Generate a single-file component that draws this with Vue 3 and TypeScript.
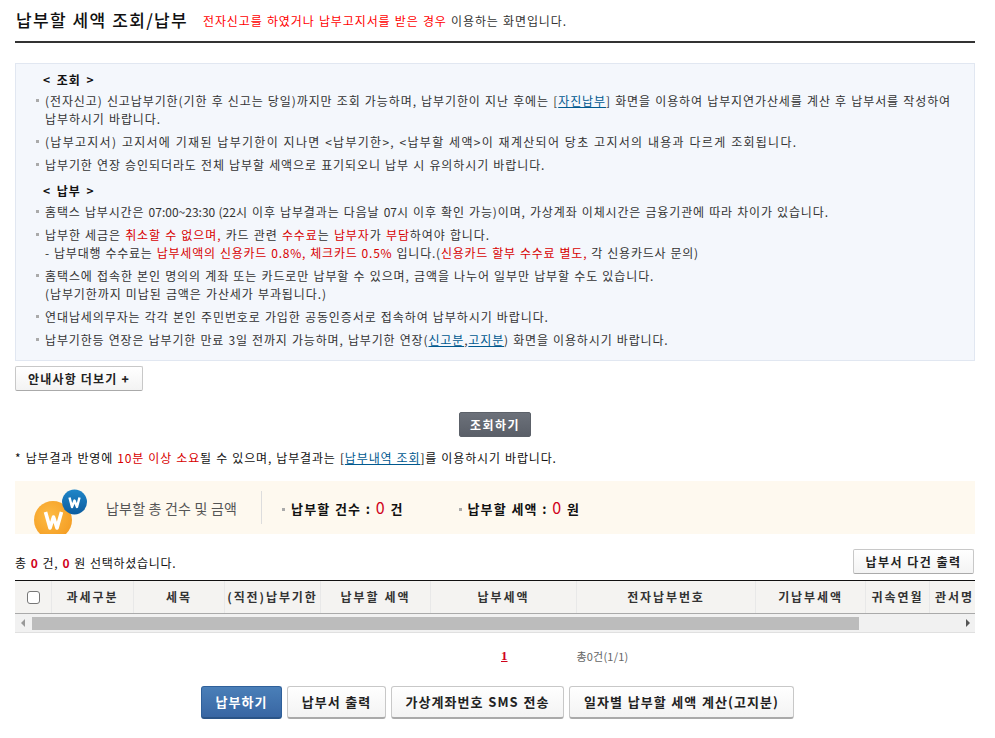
<script setup lang="ts">
const columns: { label: string; width: number }[] = [
  { label: '', width: 37 },
  { label: '과세구분', width: 82 },
  { label: '세목', width: 91 },
  { label: '(직전)납부기한', width: 96 },
  { label: '납부할 세액', width: 110 },
  { label: '납부세액', width: 146 },
  { label: '전자납부번호', width: 179 },
  { label: '기납부세액', width: 110 },
  { label: '귀속연월', width: 64 },
  { label: '관서명', width: 64 }
]
</script>

<template>
  <div class="page">
    <header class="title-row">
      <h1>납부할 세액 조회/납부</h1>
      <p><span class="bright">전자신고를 하였거나 납부고지서를 받은 경우</span> 이용하는 화면입니다.</p>
    </header>

    <section class="info">
      <h2>&lt; 조회 &gt;</h2>
      <ul>
        <li>(전자신고) 신고납부기한(기한 후 신고는 당일)까지만 조회 가능하며, 납부기한이 지난 후에는 [<a>자진납부</a>] 화면을 이용하여 납부지연가산세를 계산 후 납부서를 작성하여 납부하시기 바랍니다.</li>
        <li class="loose">(납부고지서) 고지서에 기재된 납부기한이 지나면 &lt;납부기한&gt;, &lt;납부할 세액&gt;이 재계산되어 당초 고지서의 내용과 다르게 조회됩니다.</li>
        <li>납부기한 연장 승인되더라도 전체 납부할 세액으로 표기되오니 납부 시 유의하시기 바랍니다.</li>
      </ul>
      <h2 class="second">&lt; 납부 &gt;</h2>
      <ul>
        <li class="snug">홈택스 납부시간은 <span class="digits">07:00~23:30 (22</span>시 이후 납부결과는 다음날 <span class="digits">07</span>시 이후 확인 가능)이며, 가상계좌 이체시간은 금융기관에 따라 차이가 있습니다.</li>
        <li>납부한 세금은 <span class="red">취소할 수 없으며,</span> 카드 관련 <span class="red">수수료</span>는 <span class="red">납부자</span>가 <span class="red">부담</span>하여야 합니다.<br /><span class="tight">- 납부대행 수수료는 <span class="red">납부세액의 신용카드 0.8%, 체크카드 0.5%</span> 입니다.(<span class="red">신용카드 할부 수수료 별도,</span> 각 신용카드사 문의)</span></li>
        <li>홈택스에 접속한 본인 명의의 계좌 또는 카드로만 납부할 수 있으며, 금액을 나누어 일부만 납부할 수도 있습니다.<br />(납부기한까지 미납된 금액은 가산세가 부과됩니다.)</li>
        <li>연대납세의무자는 각각 본인 주민번호로 가입한 공동인증서로 접속하여 납부하시기 바랍니다.</li>
        <li class="snug">납부기한등 연장은 납부기한 만료 3일 전까지 가능하며, 납부기한 연장(<a>신고분</a>,<a>고지분</a>) 화면을 이용하시기 바랍니다.</li>
      </ul>
    </section>

    <button class="btn more">안내사항 더보기 <b>+</b></button>

    <div class="search-row">
      <button class="btn dark">조회하기</button>
    </div>

    <p class="note">* 납부결과 반영에 <span class="red">10분 이상 소요</span>될 수 있으며, 납부결과는 [<a>납부내역 조회</a>]를 이용하시기 바랍니다.</p>

    <section class="banner">
      <svg class="coins" width="60" height="53" viewBox="0 0 60 53">
        <defs>
          <radialGradient id="orange" cx="0.4" cy="0.4" r="0.7">
            <stop offset="0" stop-color="#fdbb44" />
            <stop offset="1" stop-color="#f49c22" />
          </radialGradient>
          <linearGradient id="blue" x1="0" y1="0" x2="0" y2="1">
            <stop offset="0" stop-color="#1f86c8" />
            <stop offset="1" stop-color="#0d5c9e" />
          </linearGradient>
        </defs>
        <circle cx="20" cy="39" r="19" fill="url(#orange)" />
        <circle cx="41.500" cy="21" r="12.500" fill="url(#blue)" />
        <polyline points="12.500,31 17,47 20.500,36 24,47 28.500,31" fill="none" stroke="#fff" stroke-width="3.600" stroke-linejoin="round" />
        <polyline points="36.500,16.500 39,26 41.500,19.500 44,26 46.500,16.500" fill="none" stroke="#fff" stroke-width="2.400" stroke-linejoin="round" />
      </svg>
      <span class="banner-title">납부할 총 건수 및 금액</span>
      <span class="banner-divider"></span>
      <span class="stat first"><i class="dot"></i>납부할 건수 : <em>0</em> 건</span>
      <span class="stat"><i class="dot"></i>납부할 세액 : <em>0</em> 원</span>
    </section>

    <div class="select-row">
      <p>총 <strong>0</strong> 건, <strong>0</strong> 원 선택하셨습니다.</p>
      <button class="btn print-many">납부서 다건 출력</button>
    </div>

    <div class="table-wrap">
      <div class="thead">
        <div v-for="(c, i) in columns" :key="i" class="th" :style="{ flexBasis: c.width + 'px' }">
          <span v-if="i === 0" class="check"></span>
          <template v-else>{{ c.label }}</template>
        </div>
      </div>
      <div class="scrollbar">
        <span class="arrow left"></span>
        <span class="thumb"></span>
        <span class="arrow right"></span>
      </div>
    </div>

    <div class="pager">
      <a class="current">1</a>
      <span class="count">총0건(1/1)</span>
    </div>

    <div class="actions">
      <button class="btn big primary">납부하기</button>
      <button class="btn big w99">납부서 출력</button>
      <button class="btn big w173">가상계좌번호 SMS 전송</button>
      <button class="btn big w225">일자별 납부할 세액 계산(고지분)</button>
    </div>
  </div>
</template>

<style>
html, body { margin: 0; background: #fff; }
</style>

<style scoped>
.page {
  box-sizing: border-box;
  width: 960px;
  height: 738px;
  margin-left: 15px;
  overflow: hidden;
  font-family: "Noto Sans CJK KR", "Liberation Sans", sans-serif;
  font-size: 12px;
  line-height: 18px;
  letter-spacing: 0.9px;
  word-spacing: 0.65px;
  color: #333;
}
p, h1, h2, ul { margin: 0; padding: 0; }
.bright { color: #f00; }
.red { color: #d80000; }
a { color: #00598f; text-decoration: underline; }
.digits { letter-spacing: 0; }
.loose { letter-spacing: 1.28px; }
.snug { letter-spacing: 0.86px; }
.tight { letter-spacing: 0.77px; }

.title-row {
  display: flex;
  align-items: center;
  box-sizing: border-box;
  height: 43px;
  padding-bottom: 2px;
  border-bottom: 2px solid #333;
}
.title-row h1 {
  font-size: 17px;
  font-weight: 500;
  color: #111;
  letter-spacing: 1.3px;
  margin-left: 1px;
}
.title-row p { margin-left: 15px; padding-top: 2px; }

.info {
  margin-top: 20px;
  padding: 7px 20px 11px 20px;
  border: 1px solid #e1e7f1;
  background: #f4f7fc;
}
.info h2 {
  font-size: 12px;
  font-weight: 700;
  color: #111;
  margin: 0 0 3px 7px;
  letter-spacing: 1px;
  word-spacing: 2px;
}
.info h2.second { margin-top: 8px; }
.info ul { list-style: none; }
.info li {
  position: relative;
  padding-left: 9px;
  margin-bottom: 5px;
}
.info li:last-child { margin-bottom: 0; }
.info li::before {
  content: "";
  position: absolute;
  left: 0;
  top: 7px;
  width: 3px;
  height: 3px;
  background: #aaa;
}

.btn {
  box-sizing: border-box;
  font-family: inherit;
  font-weight: 700;
  font-size: 12px;
  line-height: 18px;
  letter-spacing: 1.5px;
  color: #222;
  padding: 0;
  border: 1px solid #c8c8c8;
  border-bottom-color: #aaa;
  border-radius: 2px;
  background: linear-gradient(#fff, #f3f3f3);
}
.more {
  display: block;
  width: 128px;
  height: 25px;
  margin-top: 5px;
  letter-spacing: 1.2px;
}
.search-row { display: flex; justify-content: center; margin-top: 21px; }
.dark {
  width: 72px;
  height: 25px;
  border: 1px solid #5c6169;
  background: linear-gradient(#6c717a, #5a5f68);
  color: #fff;
}
.note { margin-top: 12px; color: #111; letter-spacing: 0.85px; }

.banner {
  display: flex;
  align-items: center;
  height: 53px;
  margin-top: 14px;
  background: #fef9ef;
}
.coins { margin: 0 0 0 18px; align-self: flex-end; flex: none; width: 60px; }
.banner-title { margin-left: 13px; font-size: 14px; color: #555; letter-spacing: 0.2px; word-spacing: 0; }
.banner-divider { width: 1px; height: 33px; margin-left: 24px; background: #ddd; }
.stat { font-weight: 700; color: #111; font-size: 13px; letter-spacing: 1.1px; }
.stat.first { margin-left: 20px; margin-right: 55px; }
.stat em { font-style: normal; font-weight: 400; font-size: 16px; color: #d0021b; }
.dot {
  display: inline-block;
  width: 3px;
  height: 3px;
  margin-right: 6px;
  vertical-align: middle;
  background: #aaa;
}

.select-row {
  display: flex;
  justify-content: space-between;
  align-items: center;
  height: 25px;
  margin-top: 15px;
  color: #111;
}
.select-row p { padding-top: 3px; letter-spacing: 0.7px; }
.select-row strong { color: #d0021b; }
.print-many { width: 121px; height: 25px; margin-right: 1px; }

.table-wrap { margin-top: 6px; overflow: hidden; border-top: 1px solid #111; }
.thead {
  display: flex;
  height: 32px;
  box-sizing: content-box;
  background: #f4f3f1;
  border-bottom: 1px solid #aaa;
}
.th {
  flex: none;
  box-sizing: border-box;
  display: flex;
  align-items: center;
  justify-content: center;
  white-space: nowrap;
  font-weight: 700;
  color: #333;
  letter-spacing: 1.9px;
  border-right: 1px solid #e8e8e8;
}
.th:last-child { border-right: 0; justify-content: flex-start; padding-left: 5px; }
.check {
  box-sizing: border-box;
  width: 13px;
  height: 13px;
  background: #fff;
  border: 1px solid #777;
  border-radius: 3px;
}
.scrollbar {
  display: flex;
  align-items: center;
  height: 18px;
  box-sizing: content-box;
  padding: 0 5px;
  background: #f1f1f1;
  border-bottom: 1px solid #e0e0e0;
}
.thumb { width: 827px; height: 13px; margin-left: 7px; margin-top: 1px; background: #bcbcbc; }
.arrow { width: 0; height: 0; border-top: 4px solid transparent; border-bottom: 4px solid transparent; }
.arrow.left { border-right: 4px solid #999; margin-left: 1px; }
.arrow.right { border-left: 4px solid #555; margin-left: auto; }

.pager {
  display: flex;
  align-items: center;
  height: 18px;
  margin-top: 14px;
  padding-left: 486px;
}
.current { color: #d0021b; font-weight: 700; font-family: "Liberation Serif", serif; font-size: 13px; letter-spacing: 0; }
.count { margin-left: 69px; font-size: 11px; color: #666; letter-spacing: 0.2px; }

.actions {
  display: flex;
  gap: 5px;
  margin-top: 21px;
  margin-left: 186px;
}
.big { height: 33px; font-size: 13px; letter-spacing: 1.05px; word-spacing: 0.65px; border-radius: 3px; border-bottom-width: 2px; }
.primary {
  width: 81px;
  color: #fff;
  border: 1px solid #2f609a;
  border-bottom: 2px solid #2a5487;
  background: linear-gradient(#4a7fb8, #3866a3);
}
.w99 { width: 99px; }
.w173 { width: 173px; }
.w225 { width: 225px; }
</style>
